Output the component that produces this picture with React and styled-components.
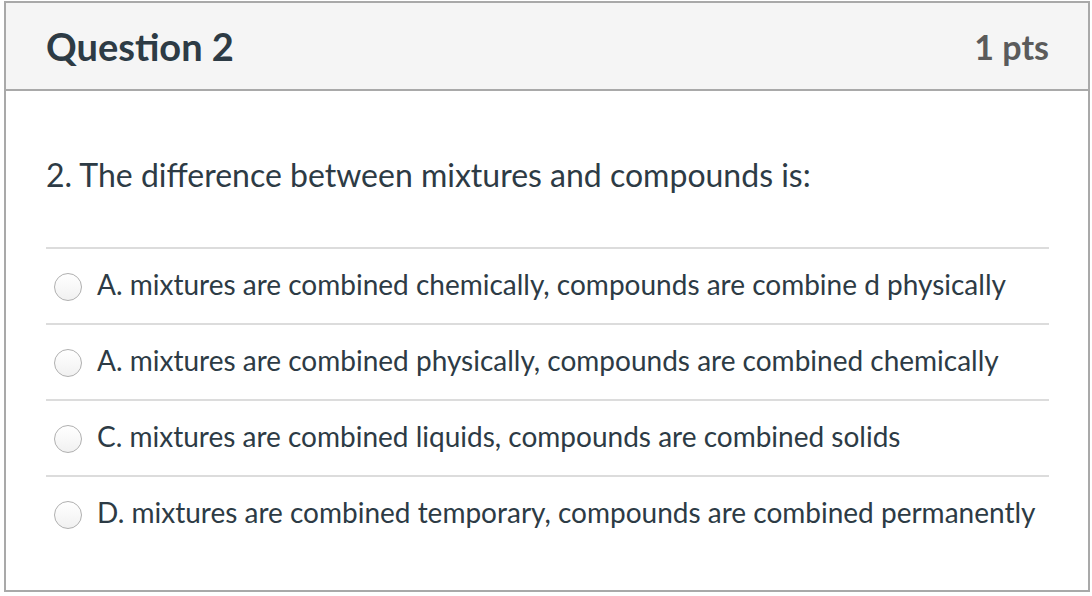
import React from 'react';
import styled, { createGlobalStyle } from 'styled-components';

const GlobalStyle = createGlobalStyle`
  html, body {
    margin: 0;
    padding: 0;
    background: #ffffff;
  }
  body {
    font-family: Lato, "Open Sans", "Liberation Sans", sans-serif;
    color: #2d3b45;
  }
`;

const Page = styled.div`
  padding: 1px 0 0 4px;
`;

const Card = styled.div`
  width: 1086px;
  height: 591px;
  box-sizing: border-box;
  border: 2px solid #a9a9a9;
  display: flex;
  flex-direction: column;
`;

const Header = styled.div`
  height: 88px;
  box-sizing: border-box;
  background: #f5f5f5;
  border-bottom: 2px solid #a9a9a9;
  display: flex;
  align-items: center;
  justify-content: space-between;
  padding: 0 39px 0 40px;
`;

const Title = styled.h2`
  margin: 0;
  font-size: 38px;
  font-weight: 700;
  color: #2d3b45;
`;

const Points = styled.span`
  font-size: 34px;
  font-weight: 700;
  color: #5b5b5b;
`;

const Body = styled.div`
  padding: 0 39px 0 40px;
`;

const Prompt = styled.p`
  margin: 64px 0 52px;
  font-size: 32px;
  line-height: 40px;
`;

const Answers = styled.ul`
  list-style: none;
  margin: 0;
  padding: 0;
`;

const Answer = styled.li`
  border-top: 2px solid #dcdcdc;
  height: 74px;
  display: flex;
  align-items: center;
  gap: 15px;
  padding-left: 8px;
  font-size: 28px;
`;

const Label = styled.span`
  margin-top: -5px;
`;

const Radio = styled.span`
  width: 28px;
  height: 28px;
  box-sizing: border-box;
  border-radius: 50%;
  border: 1.5px solid #b0b0b0;
  background: linear-gradient(#ffffff, #f1f1f1);
  flex-shrink: 0;
  margin-top: 2px;
`;

const answers = [
  'A. mixtures are combined chemically, compounds are combine d physically',
  'A. mixtures are combined physically, compounds are combined chemically',
  'C. mixtures are combined liquids, compounds are combined solids',
  'D. mixtures are combined temporary, compounds are combined permanently',
];

export default function App() {
  return (
    <>
      <GlobalStyle />
      <Page>
        <Card>
          <Header>
            <Title>Question 2</Title>
            <Points>1 pts</Points>
          </Header>
          <Body>
            <Prompt>2. The difference between mixtures and compounds is:</Prompt>
            <Answers>
              {answers.map((text, i) => (
                <Answer key={i}>
                  <Radio />
                  <Label>{text}</Label>
                </Answer>
              ))}
            </Answers>
          </Body>
        </Card>
      </Page>
    </>
  );
}
